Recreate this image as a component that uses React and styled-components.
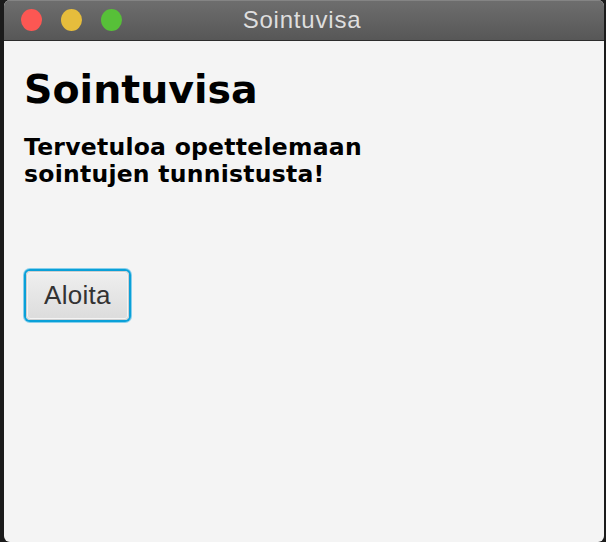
import React from 'react';
import styled, { createGlobalStyle } from 'styled-components';

const Global = createGlobalStyle`
  html, body {
    margin: 0;
    padding: 0;
    background: #1b1b1b;
    height: 100%;
  }
  #root {
    height: 100%;
  }
`

const Screen = styled.div`
  height: 542px;
  width: 606px;
  padding-left: 4px;
  padding-right: 2px;
  box-sizing: border-box;
  background: #1b1b1b;
  display: flex;
`

const Window = styled.div`
  flex: 1;
  display: flex;
  flex-direction: column;
  border-radius: 6px;
  overflow: hidden;
  background: #f4f4f4;
`

const TitleBar = styled.div`
  height: 40px;
  flex-shrink: 0;
  position: relative;
  display: flex;
  align-items: center;
  justify-content: center;
  background: linear-gradient(#6e6e6e, #575757);
  border-bottom: 1px solid #2c2c2c;
  box-shadow: inset 0 1px 0 #848484;
`

const Lights = styled.div`
  position: absolute;
  left: 17px;
  top: 9px;
  display: flex;
  gap: 19px;
`

const Light = styled.span`
  width: 21px;
  height: 22px;
  border-radius: 50%;
  background: ${p => p.color};
`

const Title = styled.div`
  font-family: "Liberation Sans", "Noto Sans", sans-serif;
  font-size: 24px;
  letter-spacing: 0.8px;
  color: #dedede;
  margin-left: -4px;
`

const Content = styled.div`
  flex: 1;
  padding: 25px 20px;
  display: flex;
  flex-direction: column;
  align-items: flex-start;
`

const Heading = styled.h1`
  margin: 0;
  font-family: "DejaVu Sans", Verdana, sans-serif;
  font-weight: bold;
  font-size: 39.5px;
  line-height: 46px;
  color: #000;
`

const Intro = styled.p`
  margin: 22px 0 0;
  font-family: "DejaVu Sans", Verdana, sans-serif;
  font-weight: bold;
  font-size: 23.5px;
  letter-spacing: 0.25px;
  line-height: 27px;
  color: #000;
  width: 400px;
`

const Button = styled.button`
  margin: 83px 0 0 2px;
  font-family: "Liberation Sans", "Noto Sans", sans-serif;
  font-size: 26px;
  letter-spacing: 0.3px;
  color: #333;
  padding: 0 17px;
  height: 49px;
  border-radius: 4px;
  border: 1px solid #cfcfcf;
  background: linear-gradient(#efefef, #dcdcdc);
  box-shadow: inset 0 0 0 1px #f4f4f4, 0 0 0 2px #0aa0d8, 0 0 0 3px #86cfec;
  outline: none;
`

export default function App() {
  return (
    <>
      <Global />
      <Screen>
        <Window>
          <TitleBar>
            <Lights>
              <Light color="#fc5753" />
              <Light color="#e6bd3c" />
              <Light color="#57c038" />
            </Lights>
            <Title>Sointuvisa</Title>
          </TitleBar>
          <Content>
            <Heading>Sointuvisa</Heading>
            <Intro>Tervetuloa opettelemaan sointujen tunnistusta!</Intro>
            <Button>Aloita</Button>
          </Content>
        </Window>
      </Screen>
    </>
  );
}
